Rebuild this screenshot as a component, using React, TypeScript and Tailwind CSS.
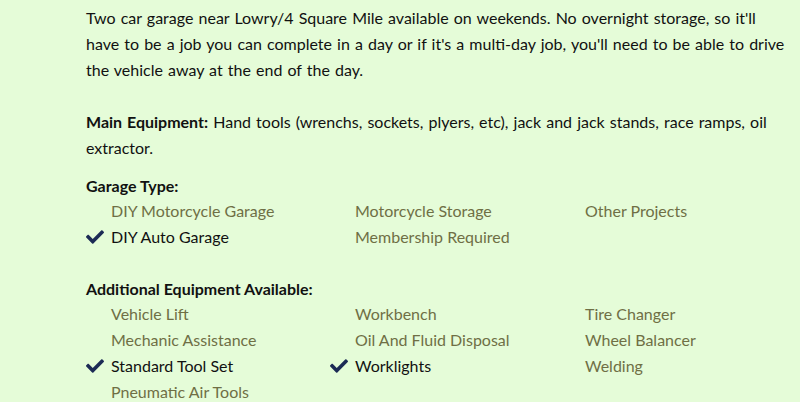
import React from 'react';
import { FaCheck } from 'react-icons/fa';

type Item = { label: string; checked?: boolean };

const garageTypes: Item[] = [
  { label: 'DIY Motorcycle Garage' },
  { label: 'Motorcycle Storage' },
  { label: 'Other Projects' },
  { label: 'DIY Auto Garage', checked: true },
  { label: 'Membership Required' },
];

const equipment: Item[] = [
  { label: 'Vehicle Lift' },
  { label: 'Workbench' },
  { label: 'Tire Changer' },
  { label: 'Mechanic Assistance' },
  { label: 'Oil And Fluid Disposal' },
  { label: 'Wheel Balancer' },
  { label: 'Standard Tool Set', checked: true },
  { label: 'Worklights', checked: true },
  { label: 'Welding' },
  { label: 'Pneumatic Air Tools' },
];

const FeatureGrid = ({ items }: { items: Item[] }) => (
  <ul className="grid grid-cols-[244px_230px_1fr]">
    {items.map((item) => (
      <li key={item.label} className="flex items-center h-[26px]">
        <span className="w-[25px] flex items-center">
          {item.checked && <FaCheck className="w-[18px] h-[18px] text-[#1c2b55]" />}
        </span>
        <span className={item.checked ? 'text-[#111111]' : 'text-[#6f6f45]'}>{item.label}</span>
      </li>
    ))}
  </ul>
);

export default function App() {
  return (
    <div
      className="w-[800px] h-[402px] overflow-hidden bg-[#e5fcd8] text-[#111111] text-[16px] leading-[26px] pl-[86px] pr-[12px] pt-[5px]"
      style={{ fontFamily: 'Lato, "Noto Sans", sans-serif' }}
    >
      <p className="[word-spacing:1px]">
        Two car garage near Lowry/4 Square Mile available on weekends. No overnight storage, so it'll
        have to be a job you can complete in a day or if it's a multi-day job, you'll need to be able to drive
        the vehicle away at the end of the day.
      </p>

      <p className="mt-[26px] [word-spacing:1px]">
        <strong className="font-bold">Main Equipment:</strong> Hand tools (wrenchs, sockets, plyers, etc), jack and jack stands, race ramps, oil
        extractor.
      </p>

      <div className="mt-[12px]">
        <h4 className="font-bold h-[25px] leading-[25px]">Garage Type:</h4>
        <FeatureGrid items={garageTypes} />
      </div>

      <div className="mt-[26px]">
        <h4 className="font-bold h-[25px] leading-[25px]">Additional Equipment Available:</h4>
        <FeatureGrid items={equipment} />
      </div>
    </div>
  );
}
